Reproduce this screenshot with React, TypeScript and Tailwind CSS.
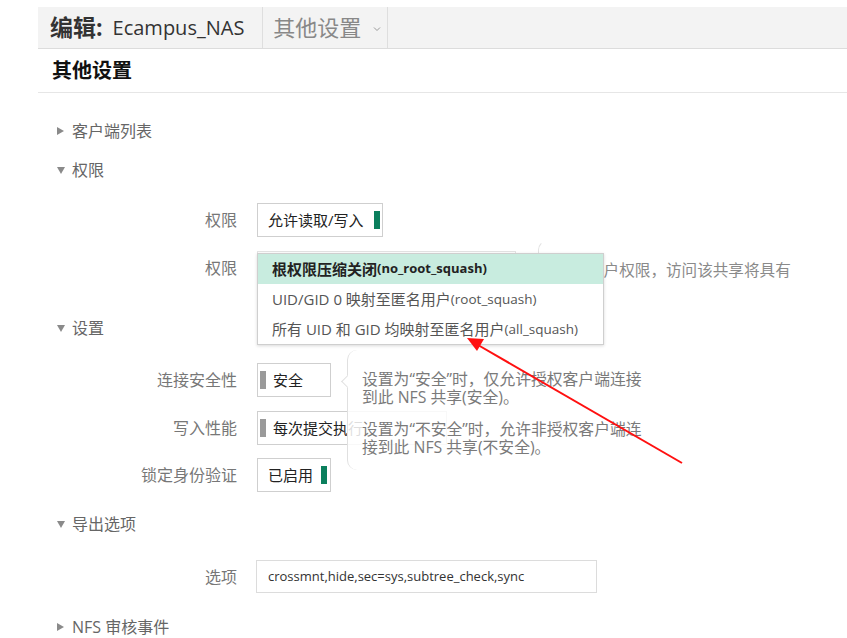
import React from 'react';

const Tri = ({ open }: { open: boolean }) =>
  open ? (
    <span className="mr-[7px] inline-block h-0 w-0 border-x-[4.5px] border-t-[7px] border-x-transparent border-t-[#8a8a8a]" />
  ) : (
    <span className="mr-[8px] inline-block h-0 w-0 border-y-[4.5px] border-l-[7px] border-y-transparent border-l-[#8a8a8a]" />
  );

const Section = ({ open, title, className = '' }: { open: boolean; title: string; className?: string }) => (
  <div className={`flex h-[24px] items-center pl-[57px] text-[16px] text-[#666] ${className}`}>
    <Tri open={open} />
    <span>{title}</span>
  </div>
);

const Row = ({ label, className = '', children }: { label: string; className?: string; children: React.ReactNode }) => (
  <div className={`flex items-center ${className}`}>
    <div className="w-[237px] text-right text-[16px] text-[#777]">{label}</div>
    <div className="ml-[20px]">{children}</div>
  </div>
);

const Bar = ({ color }: { color: string }) => <span className={`inline-block h-[18px] w-[6px] ${color}`} />;

export default function App() {
  return (
    <div className="relative h-[638px] w-[847px] overflow-hidden bg-white font-['Open_Sans','Noto_Sans_CJK_SC',sans-serif] text-[#333]">
      {/* top bar */}
      <div className="pt-[7px]">
        <div className="ml-[38px] flex h-[42px] items-stretch border-b border-[#dcdcdc] bg-[#f3f3f3] pl-[12px]">
          <div className="flex items-center pr-[18px]">
            <span className="text-[23px] font-bold text-[#333]">编辑:</span>
            <span className="ml-[10px] text-[20px] text-[#333]">Ecampus_NAS</span>
          </div>
          <div className="flex items-center border-x border-[#dedede] pl-[10px] pr-[6px]">
            <span className="text-[22px] text-[#888]">其他设置</span>
            <svg className="ml-[12px] mt-[3px]" width="8" height="6" viewBox="0 0 8 6">
              <path d="M1 1.5 L4 4.5 L7 1.5" fill="none" stroke="#999" strokeWidth="1" />
            </svg>
          </div>
        </div>
        <div className="ml-[38px] flex h-[44px] items-center border-b border-[#e6e6e6] pl-[14px] text-[20px] font-bold text-[#111]">
          其他设置
        </div>
      </div>

      {/* body */}
      <Section open={false} title="客户端列表" className="mt-[26px]" />
      <Section open title="权限" className="mt-[15px]" />

      <Row label="权限" className="mt-[21px]">
        <div className="flex h-[34px] w-[126px] items-center justify-between border border-[#cfcfcf] bg-white pl-[10px] pr-[2px] text-[15px] text-[#222]">
          <span>允许读取/写入</span>
          <Bar color="bg-[#0b7f5d]" />
        </div>
      </Row>
      <Row label="权限" className="mt-[14px]">
        <div className="flex h-[34px] w-[259px] items-center border border-[#e3e3e3] bg-white pl-[10px] text-[15px]" />
      </Row>

      <Section open title="设置" className="mt-[31px]" />

      <Row label="连接安全性" className="mt-[23px]">
        <div className="flex h-[34px] w-[74px] items-center border border-[#cfcfcf] bg-white pl-[2px] text-[15px] text-[#222]">
          <Bar color="bg-[#9a9a9a]" />
          <span className="ml-[7px]">安全</span>
        </div>
      </Row>
      <Row label="写入性能" className="mt-[14px]">
        <div className="flex h-[34px] w-[190px] items-center overflow-hidden whitespace-nowrap border border-[#cfcfcf] bg-white pl-[2px] text-[15px] text-[#222]">
          <Bar color="bg-[#9a9a9a]" />
          <span className="ml-[7px]">每次提交执行</span>
        </div>
      </Row>
      <Row label="锁定身份验证" className="mt-[13px]">
        <div className="flex h-[34px] w-[74px] items-center justify-between border border-[#cfcfcf] bg-white pl-[10px] pr-[3px] text-[15px] text-[#222]">
          <span>已启用</span>
          <Bar color="bg-[#0b7f5d]" />
        </div>
      </Row>

      <Section open title="导出选项" className="mt-[20px]" />
      <Row label="选项" className="mt-[24px]">
        <div className="-ml-[1px] flex h-[33px] w-[341px] items-center border border-[#dcdcdc] bg-white pl-[11px] text-[13px] text-[#333]">
          crossmnt,hide,sec=sys,subtree_check,sync
        </div>
      </Row>
      <Section open={false} title="NFS 审核事件" className="mt-[22px]" />

      {/* tooltip behind the open list */}
      <div className="absolute left-[538px] top-[240px] h-[70px] w-[300px] rounded-tl-[10px] border-l border-t border-[#e2e2e2] border-t-transparent bg-white/90 pl-[49px] pt-[18px] text-[15.6px] whitespace-nowrap text-[#8a8a8a]">
        用户权限，访问该共享将具有
      </div>

      {/* open list */}
      <div className="absolute left-[257px] top-[253px] w-[347px] border border-[#cfcfcf] bg-white shadow-[0_1px_3px_rgba(0,0,0,0.15)]">
        <div className="flex h-[30px] items-center bg-[#c8ecdf] pl-[14px] font-bold text-[#222]">
          <span className="text-[15px]">根权限压缩关闭</span>
          <span className="text-[13px]">(no_root_squash)</span>
        </div>
        <div className="flex h-[30px] items-center pl-[14px] text-[#555]">
          <span className="text-[15px]">UID/GID 0 映射至匿名用户</span>
          <span className="text-[13.5px]">(root_squash)</span>
        </div>
        <div className="flex h-[30px] items-center pl-[14px] text-[#555]">
          <span className="text-[15px]">所有 UID 和 GID 均映射至匿名用户</span>
          <span className="text-[13.5px]">(all_squash)</span>
        </div>
      </div>

      {/* tooltip for 连接安全性 */}
      <div className="absolute left-[347px] top-[350px] h-[120px] w-[320px] rounded-l-[10px] border-l border-[#e0e0e0] bg-white/85 pl-[14px] pt-[20px] text-[15.8px] leading-[18px] text-[#7a7a7a]">
        <span className="absolute -left-[5px] top-[27px] h-[9px] w-[9px] rotate-45 border-b border-l border-[#e0e0e0] bg-white" />
        <p>设置为“安全”时，仅允许授权客户端连接</p>
        <p>到此 NFS 共享(安全)。</p>
        <p className="mt-[14px]">设置为“不安全”时，允许非授权客户端连</p>
        <p>接到此 NFS 共享(不安全)。</p>
      </div>

      {/* red annotation arrow */}
      <svg className="pointer-events-none absolute left-0 top-0" width="847" height="638" viewBox="0 0 847 638">
        <line x1="682" y1="463" x2="478" y2="345" stroke="#ff1010" strokeWidth="2" />
        <polygon points="467,338 484,339 477,351" fill="#ff1010" />
      </svg>
    </div>
  );
}
